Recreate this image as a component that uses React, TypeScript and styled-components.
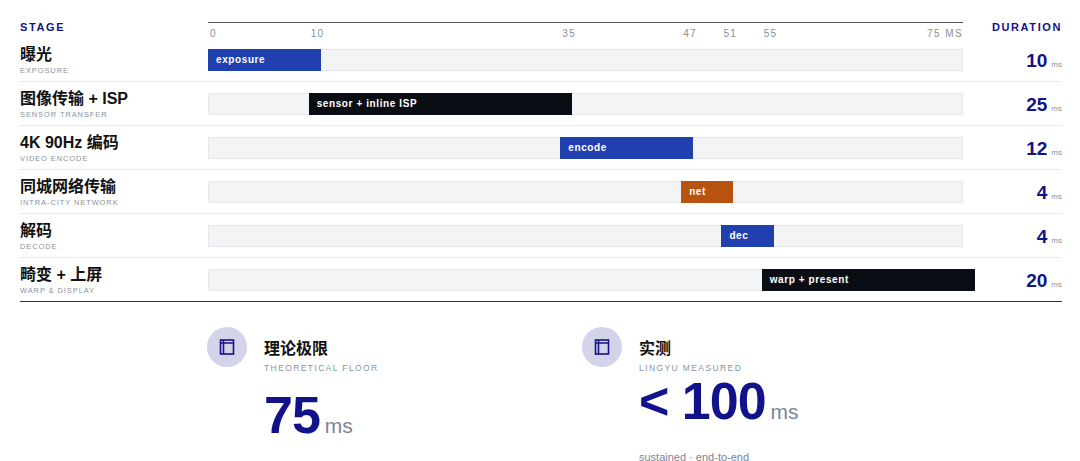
import React from "react";
import styled, { createGlobalStyle } from "styled-components";

const G = createGlobalStyle`
  body { margin: 0; background: #fff; font-family: "Liberation Sans", Arial, "Noto Sans CJK SC", sans-serif; }
`;
const NAVY = "#12128a";
const TRACK = 755;
const PX = TRACK / 75;

const Page = styled.div`padding: 17px 18px 0 20px; width: 1042px;`;
const Grid = styled.div`display: grid; grid-template-columns: 188px 755px 99px;`;
const Head = styled(Grid)`height: 21px; align-items: start;`;
const HeadLabel = styled.div<{ $right?: boolean }>`
  font-size: 11px; font-weight: 700; letter-spacing: 1.6px; color: ${NAVY};
  padding-top: 4px; text-align: ${p => (p.$right ? "right" : "left")};
`;
const Axis = styled.div`position: relative; border-top: 1.5px solid #555; margin-top: 5px; height: 14px;`;
const Tick = styled.span<{ $end?: boolean }>`
  position: absolute; top: 5px; font-size: 10px; color: #8a8f98; letter-spacing: 1.4px;
  ${p => (p.$end ? "right: 0;" : "")}
`;
const Row = styled(Grid)<{ $last?: boolean }>`
  height: 44px; box-sizing: border-box; align-items: center;
  border-bottom: ${p => (p.$last ? "1.5px solid #333" : "1px solid #e6e8ec")};
`;
const Stage = styled.div`display: flex; flex-direction: column; padding-top: 1px;`;
const Zh = styled.div`font-size: 16px; color: #111; line-height: 20px; font-weight: 700;`;
const Sub = styled.div`font-size: 7.5px; color: #8a93a0; letter-spacing: 0.9px; margin-top: 1px;`;
const Track = styled.div`position: relative; height: 20px; background: #f3f4f6; border: 1px solid #e4e6ea;`;
const Bar = styled.div<{ $c: string }>`
  position: absolute; top: -1px; height: 22px; background: ${p => p.$c};
  color: #fff; font-size: 10px; font-weight: 700; letter-spacing: 0.6px;
  display: flex; align-items: center; padding-left: 8px; box-sizing: border-box; white-space: nowrap;
`;
const Dur = styled.div`text-align: right; color: ${NAVY}; font-size: 19px; font-weight: 700; padding-top: 3px;`;
const Unit = styled.span`font-size: 8px; color: #8a93a0; font-weight: 400; margin-left: 4px;`;

const Cards = styled.div`display: flex; padding: 25px 0 0 187px;`;
const Card = styled.div`width: 375px; display: grid; grid-template-columns: 40px 1fr; column-gap: 17px;`;
const Circle = styled.div`width: 40px; height: 40px; border-radius: 50%; background: #d3d3ea; display: flex; align-items: center; justify-content: center;`;
const Title = styled.div`font-size: 16px; color: #111; margin-top: 8px; font-weight: 700;`;
const CSub = styled.div`font-size: 8.5px; color: #8a93a0; letter-spacing: 1.4px; margin-top: 4px;`;
const Big = styled.div`grid-column: 2; color: ${NAVY}; font-size: 52px; font-weight: 700; letter-spacing: -1px; line-height: 48px; margin-top: 4px;`;
const BigUnit = styled.span`font-size: 21px; color: #7b8494; font-weight: 400; letter-spacing: 0; margin-left: 5px;`;
const Note = styled.div`grid-column: 2; font-size: 11px; color: #7b8494; margin-top: 15px;`;

const Icon = () => (
  <svg width="18" height="18" viewBox="0 0 18 18" fill="none" stroke={NAVY} strokeWidth="1.6">
    <rect x="2.5" y="2" width="13" height="14" />
    <path d="M5.5 2 V16 M2.5 5 H15.5" />
  </svg>
);

const rows = [
  ["曝光", "EXPOSURE", 0, 10, "#2140b0", "exposure"],
  ["图像传输 + ISP", "SENSOR TRANSFER", 10, 25, "#0b0d14", "sensor + inline ISP"],
  ["4K 90Hz 编码", "VIDEO ENCODE", 35, 12, "#2140b0", "encode"],
  ["同城网络传输", "INTRA-CITY NETWORK", 47, 4, "#b8520f", "net"],
  ["解码", "DECODE", 51, 4, "#2140b0", "dec"],
  ["畸变 + 上屏", "WARP & DISPLAY", 55, 20, "#0b0d14", "warp + present"],
] as const;

export default function App() {
  return (
    <Page>
      <G />
      <Head>
        <HeadLabel>STAGE</HeadLabel>
        <Axis>
          {[0, 10, 35, 47, 51, 55].map(t => (
            <Tick key={t} style={{ left: t * PX + 2 }}>{t}</Tick>
          ))}
          <Tick $end>75 MS</Tick>
        </Axis>
        <HeadLabel $right>DURATION</HeadLabel>
      </Head>
      {rows.map(([zh, sub, s, d, c, l], i) => (
        <Row key={zh} $last={i === rows.length - 1}>
          <Stage><Zh>{zh}</Zh><Sub>{sub}</Sub></Stage>
          <Track>
            <Bar $c={c} style={{ left: s * PX - 1, width: d * PX + 12 }}>{l}</Bar>
          </Track>
          <Dur>{d}<Unit>ms</Unit></Dur>
        </Row>
      ))}
      <Cards>
        <Card>
          <Circle><Icon /></Circle>
          <div><Title>理论极限</Title><CSub>THEORETICAL FLOOR</CSub></div>
          <Big>75<BigUnit>ms</BigUnit></Big>
        </Card>
        <Card>
          <Circle><Icon /></Circle>
          <div><Title>实测</Title><CSub>LINGYU MEASURED</CSub></div>
          <Big>&lt; 100<BigUnit>ms</BigUnit></Big>
          <Note>sustained · end-to-end</Note>
        </Card>
      </Cards>
    </Page>
  );
}
